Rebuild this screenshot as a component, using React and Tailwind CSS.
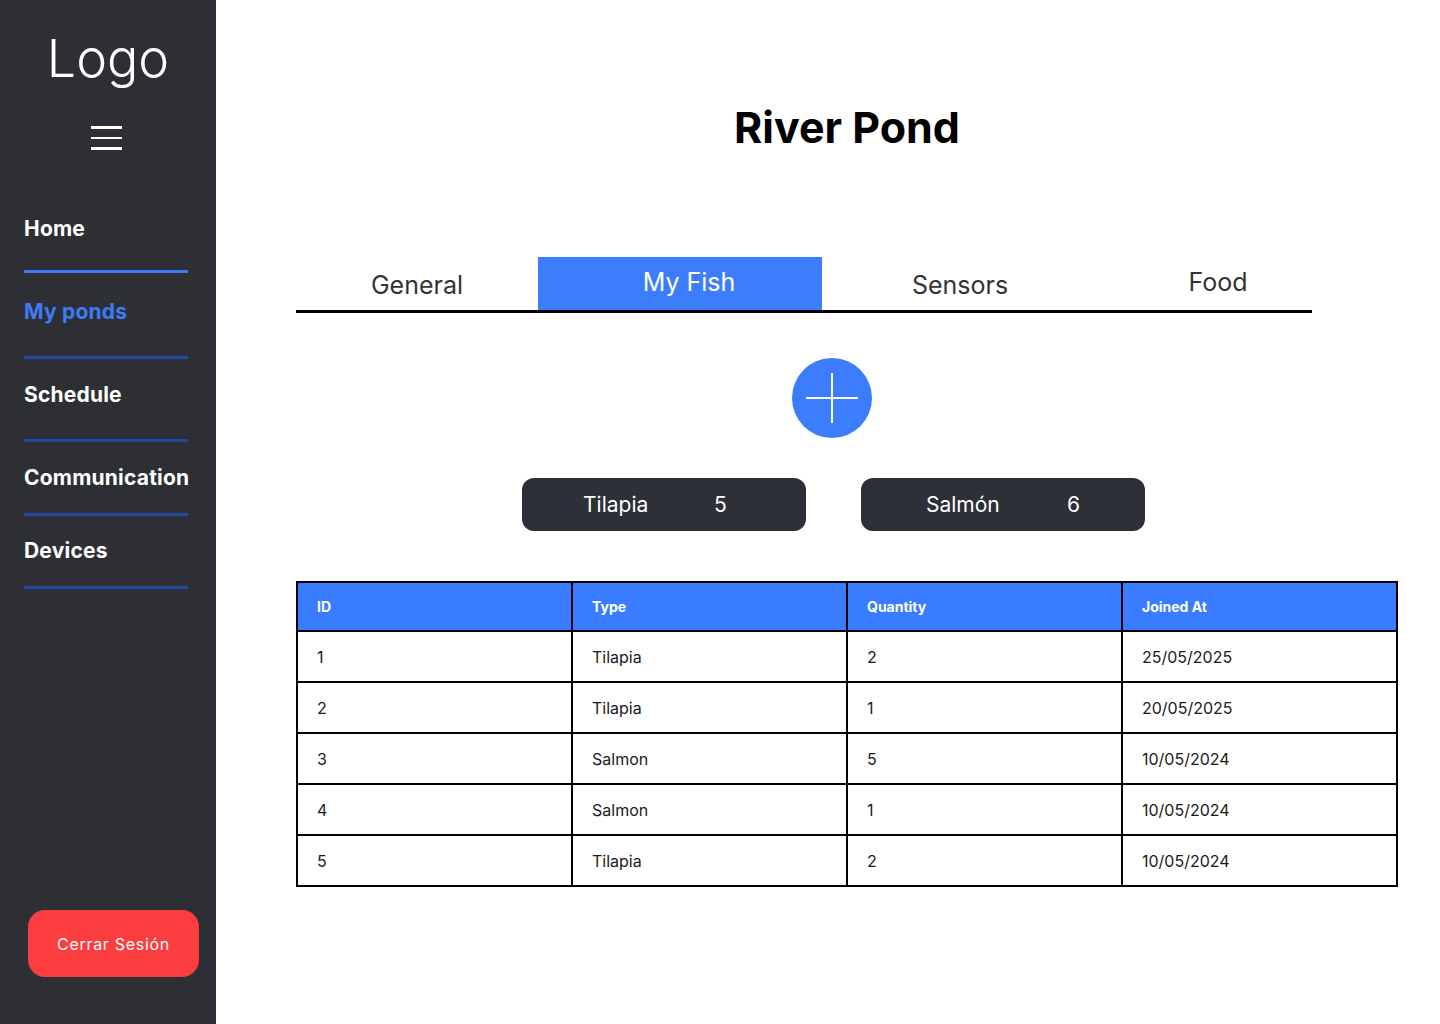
import React from "react";

const rows = [
  ["1", "Tilapia", "2", "25/05/2025"],
  ["2", "Tilapia", "1", "20/05/2025"],
  ["3", "Salmon", "5", "10/05/2024"],
  ["4", "Salmon", "1", "10/05/2024"],
  ["5", "Tilapia", "2", "10/05/2024"],
];

function NavItem({ label, active, bright, h, mt }) {
  return (
    <div className="flex flex-col">
      <div className={`${h} flex flex-col`}>
        <div
          className={`${mt} leading-[24px] text-[21px] tracking-[0.2px] font-bold ${active ? "text-[#3b7cf6]" : "text-white"}`}
        >
          {label}
        </div>
      </div>
      <div className={`h-[3px] w-[164px] ${bright ? "bg-[#3a7af5]" : "bg-[#1f4aa0]"}`} />
    </div>
  );
}

export default function App() {
  return (
    <div className="flex w-[1440px] h-[1024px] bg-white font-['Inter',sans-serif] overflow-hidden">
      <aside className="w-[216px] shrink-0 bg-[#2d2f34] flex flex-col">
        <div className="h-[108px] flex items-center justify-center pt-[10px] text-white text-[52px] font-light">
          Logo
        </div>
        <div className="flex justify-center pt-[18px] pr-[4px]">
          <div className="flex flex-col gap-[8px] w-[31px]">
            <div className="h-[2.5px] bg-white" />
            <div className="h-[2.5px] bg-white" />
            <div className="h-[2.5px] bg-white" />
          </div>
        </div>
        <nav className="pl-[24px] mt-[44px] flex flex-col">
          <NavItem label="Home" bright h="h-[76px]" mt="mt-[23px]" />
          <NavItem label="My ponds" active h="h-[83px]" mt="mt-[27px]" />
          <NavItem label="Schedule" h="h-[80px]" mt="mt-[24px]" />
          <NavItem label="Communication" h="h-[71px]" mt="mt-[24px]" />
          <NavItem label="Devices" h="h-[70px]" mt="mt-[23px]" />
        </nav>
        <div className="mt-auto mb-[47px] ml-[28px]">
          <button className="w-[171px] h-[67px] rounded-[17px] bg-[#fc3d40] text-white text-[16px] tracking-[0.7px]">
            Cerrar Sesión
          </button>
        </div>
      </aside>

      <main className="flex-1 flex flex-col pl-[80px] pr-[43px]">
        <h1 className="h-[150px] pt-[106px] flex justify-center text-[43px] font-bold text-black leading-none">
          River Pond
        </h1>
        <div className="mt-[107px] w-[1016px] flex border-b-[3px] border-black h-[56px] text-[25px] text-[#333]">
          <div className="w-[242px] flex items-end justify-center pb-[6px]">General</div>
          <div className="w-[284px] flex items-center justify-center bg-[#3b7dfd] text-white pb-[2px] pl-[18px]">My Fish</div>
          <div className="w-[276px] flex items-end justify-center pb-[6px]">Sensors</div>
          <div className="flex-1 flex items-end justify-center pb-[9px] pl-[26px]">Food</div>
        </div>

        <div className="flex justify-center mt-[45px] pr-[20px] w-[1092px]">
          <div className="w-[80px] h-[80px] rounded-full bg-[#3b7dfd] relative">
            <div className="absolute left-[39px] top-[15px] w-[2px] h-[50px] bg-white" />
            <div className="absolute top-[39px] left-[14px] h-[2px] w-[52px] bg-white" />
          </div>
        </div>

        <div className="flex mt-[40px] ml-[226px] gap-[55px]">
          <div className="w-[284px] h-[53px] rounded-[12px] bg-[#2d3036] text-white text-[21px] flex items-center pl-[61px]">
            <span className="w-[131px]">Tilapia</span>
            <span>5</span>
          </div>
          <div className="w-[284px] h-[53px] rounded-[12px] bg-[#2d3036] text-white text-[21px] flex items-center pl-[65px]">
            <span className="w-[141px]">Salmón</span>
            <span>6</span>
          </div>
        </div>

        <table className="mt-[50px] w-[1102px] border-collapse border-2 border-black table-fixed">
          <thead>
            <tr className="bg-[#3a7cff] h-[49px]">
              {["ID", "Type", "Quantity", "Joined At"].map((h) => (
                <th key={h} className="border-2 border-black text-left pl-[19px] text-[14px] font-bold text-white">
                  {h}
                </th>
              ))}
            </tr>
          </thead>
          <tbody>
            {rows.map((r, i) => (
              <tr key={i} className="h-[51px]">
                {r.map((c, j) => (
                  <td key={j} className="border-2 border-black pl-[19px] text-[16px] text-[#1a1a1a]">
                    {c}
                  </td>
                ))}
              </tr>
            ))}
          </tbody>
        </table>
      </main>
    </div>
  );
}
